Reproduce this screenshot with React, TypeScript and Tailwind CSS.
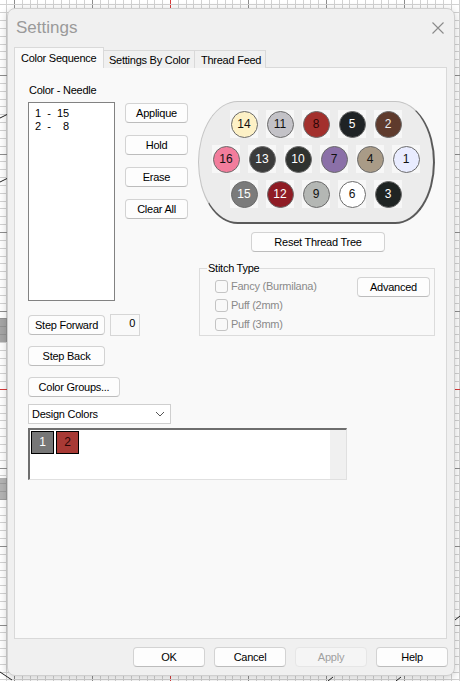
import React from "react";

type C = [number, string, string];
const row1: C[] = [
  [14, "#fdf1c6", "#111"],
  [11, "#c3c2c7", "#111"],
  [8, "#a3302d", "#2a0505"],
  [5, "#1f2325", "#fff"],
  [2, "#5f3b2d", "#eee"],
];
const row2: C[] = [
  [16, "#f27d9c", "#111"],
  [13, "#3b3b3b", "#fff"],
  [10, "#2f322f", "#fff"],
  [7, "#8b70a8", "#111"],
  [4, "#a99b87", "#111"],
  [1, "#e9ecff", "#111"],
];
const row3: C[] = [
  [15, "#7b7b7b", "#fff"],
  [12, "#8f1c25", "#fff"],
  [9, "#b4b7b4", "#111"],
  [6, "#ffffff", "#111"],
  [3, "#1f2423", "#fff"],
];

function GridBg() {
  const v: React.ReactNode[] = [];
  for (let k = -2; k < 60; k++) {
    const x = 14 + 7.8 * k;
    const major = k % 10 === 0;
    const red = k === 20;
    v.push(
      <line
        key={"v" + k}
        x1={Math.round(x) + 0.5}
        x2={Math.round(x) + 0.5}
        y1={0}
        y2={681}
        stroke={red ? "#d63a3a" : major ? "#8e8e8e" : "#d2d2d2"}
        strokeWidth={1}
      />
    );
  }
  for (let k = -10; k < 80; k++) {
    const y = 75 + 7.85 * k;
    const major = k % 10 === 0;
    const red = k === 40;
    v.push(
      <line
        key={"h" + k}
        y1={Math.round(y) + 0.5}
        y2={Math.round(y) + 0.5}
        x1={0}
        x2={460}
        stroke={red ? "#d63a3a" : major ? "#8e8e8e" : "#d2d2d2"}
        strokeWidth={1}
      />
    );
  }
  return (
    <svg className="absolute inset-0" width={460} height={681}>
      <rect width={460} height={681} fill="#ffffff" />
      {v}
      <rect x={0} y={318} width={7} height={24} fill="#6a6a6a" opacity={0.6} />
      <rect x={0} y={478} width={7} height={22} fill="#6a6a6a" opacity={0.5} />
      <line x1={0} y1={182} x2={8} y2={178} stroke="#222" />
      <line x1={0} y1={118} x2={8} y2={114} stroke="#222" />
      <line x1={0} y1={672} x2={12} y2={680} stroke="#222" />
      <line x1={455} y1={620} x2={460} y2={616} stroke="#222" />
      <line x1={328} y1={681} x2={333} y2={677} stroke="#222" />
      <line x1={396} y1={681} x2={401} y2={677} stroke="#222" />
    </svg>
  );
}

function Btn({
  children,
  className = "",
  disabled = false,
}: {
  children: React.ReactNode;
  className?: string;
  disabled?: boolean;
}) {
  return (
    <div
      className={
        "flex h-[20px] items-center justify-center rounded-[4px] border " +
        (disabled
          ? "border-[#e6e6e6] bg-[#f5f5f5] text-[#a0a0a0] "
          : "border-[#d3d3d3] border-b-[#bcbcbc] bg-[#fdfdfd] text-black ") +
        className
      }
    >
      {children}
    </div>
  );
}

function Circle({ c }: { c: C }) {
  return (
    <div className="flex h-[28px] w-[28px] items-center justify-center bg-[#f7f7f7]">
      <div
        className="flex h-[27px] w-[27px] items-center justify-center rounded-full border border-[#6a6a6a] text-[12px] tracking-[0px]"
        style={{ backgroundColor: c[1], color: c[2] }}
      >
        {c[0]}
      </div>
    </div>
  );
}

function Check({ label }: { label: string }) {
  return (
    <div className="flex h-[19px] items-center gap-[3px]">
      <div className="h-[13px] w-[13px] rounded-[3px] border border-[#c4c4c4] bg-[#f9f9f9]" />
      <span className="text-[#8a8a8a]">{label}</span>
    </div>
  );
}

export default function App() {
  return (
    <div className="relative h-[681px] w-[460px] overflow-hidden font-['Liberation_Sans',Arial,sans-serif] text-[11px] leading-[13px] tracking-[-0.25px] text-black">
      <GridBg />
      <div className="relative pl-[7px] pt-[8px]">
        <div className="flex h-[668px] w-[448px] flex-col rounded-[8px] border border-[#cfcfcf] bg-[#f0f0f0] shadow-[0_2px_8px_rgba(0,0,0,0.2)]">
          {/* Title bar */}
          <div className="flex h-[38px] items-center justify-between pl-[8px] pr-[8px]">
            <span className="text-[17px] leading-[20px] tracking-[0px] text-[#9a9a9a]">Settings</span>
            <svg width="14" height="14" viewBox="0 0 14 14" className="mr-[1px]">
              <path d="M1.5 1.5 L12.5 12.5 M12.5 1.5 L1.5 12.5" stroke="#8a8a8a" strokeWidth="1.1" />
            </svg>
          </div>
          {/* Tabs */}
          <div className="relative z-10 flex h-[21px] items-end pl-[6px]">
            <div className="flex h-[21px] w-[90px] items-start border border-b-0 border-[#d9d9d9] bg-[#f9f9f9] pl-[6px] pt-[4px]">
              Color Sequence
            </div>
            <div className="flex h-[18px] w-[91px] items-start border border-b-0 border-l-0 border-[#d9d9d9] bg-[#f0f0f0] pl-[5px] pt-[3px]">
              Settings By Color
            </div>
            <div className="flex h-[18px] w-[71px] items-start border border-b-0 border-l-0 border-[#d9d9d9] bg-[#f0f0f0] pl-[6px] pt-[3px]">
              Thread Feed
            </div>
          </div>
          {/* Panel */}
          <div className="ml-[6px] h-[572px] w-[433px] -mt-px border border-[#d9d9d9] bg-[#f9f9f9] pl-[13px] pt-[16px]">
            <div className="flex items-start gap-[10px]">
              {/* Left column */}
              <div className="flex w-[160px] flex-col">
                <div className="pl-[1px]">Color - Needle</div>
                <div className="mt-[5px] flex items-start gap-[10px]">
                  <div className="h-[199px] w-[87px] border border-[#828282] bg-white pl-[6px] pt-[4px] tracking-[0px]">
                    <div className="whitespace-pre">{"1  -  15"}</div>
                    <div className="whitespace-pre">{"2  -    8"}</div>
                  </div>
                  <div className="mt-[1px] flex flex-col gap-[12px]">
                    <Btn className="w-[63px]">Applique</Btn>
                    <Btn className="w-[63px]">Hold</Btn>
                    <Btn className="w-[63px]">Erase</Btn>
                    <Btn className="w-[63px]">Clear All</Btn>
                  </div>
                </div>
                <div className="mt-[13px] flex items-center gap-[5px]">
                  <Btn className="w-[77px]">Step Forward</Btn>
                  <div className="flex h-[22px] w-[30px] items-start justify-end border border-[#d6d6d6] bg-[#f9f9f9] pr-[4px] pt-[2px]">
                    0
                  </div>
                </div>
                <Btn className="mt-[10px] w-[77px]">Step Back</Btn>
                <Btn className="mt-[11px] w-[92px]">Color Groups...</Btn>
                <div className="mt-[7px] flex h-[20px] w-[143px] items-center justify-between border border-[#cfcfcf] bg-white pl-[3px] pr-[5px]">
                  <span>Design Colors</span>
                  <svg width="10" height="6" viewBox="0 0 10 6">
                    <path d="M1 1 L5 5 L9 1" fill="none" stroke="#555" strokeWidth="1" />
                  </svg>
                </div>
              </div>
              {/* Right column */}
              <div className="mt-[17px] flex w-[237px] flex-col">
                <div className="flex h-[123px] w-[237px] flex-col items-center gap-[7px] rounded-[40px/62px] border border-[#c4c4c4] border-b-2 border-r-2 border-b-[#5a5a5a] border-r-[#5a5a5a] bg-[#ececec] pt-[8px]">
                  <div className="flex gap-[8px]">
                    {row1.map((c) => (
                      <Circle key={c[0]} c={c} />
                    ))}
                  </div>
                  <div className="flex gap-[8px]">
                    {row2.map((c) => (
                      <Circle key={c[0]} c={c} />
                    ))}
                  </div>
                  <div className="flex gap-[8px]">
                    {row3.map((c) => (
                      <Circle key={c[0]} c={c} />
                    ))}
                  </div>
                </div>
                <Btn className="ml-[53px] mt-[8px] w-[134px]">Reset Thread Tree</Btn>
                <div className="relative ml-[1px] mt-[16px] h-[68px] w-[236px] border border-[#dcdcdc]">
                  <div className="absolute -top-[7px] left-[7px] bg-[#f9f9f9] px-[1px]">Stitch Type</div>
                  <div className="flex justify-between pl-[15px] pr-[4px] pt-[8px]">
                    <div className="flex flex-col">
                      <Check label="Fancy (Burmilana)" />
                      <Check label="Puff (2mm)" />
                      <Check label="Puff (3mm)" />
                    </div>
                    <Btn className="mt-[0px] w-[73px]">Advanced</Btn>
                  </div>
                </div>
              </div>
            </div>
            {/* Color box */}
            <div className="mt-[4px] flex h-[52px] w-[319px] border-l-2 border-t-2 border-b border-r border-l-[#6e6e6e] border-t-[#6e6e6e] border-b-[#e0e0e0] border-r-[#e0e0e0] bg-white">
              <div className="flex flex-1 items-start gap-[2px] pl-[1px] pt-[1px] tracking-[0px]">
                <div className="flex h-[23px] w-[23px] items-center justify-center border border-black bg-[#777777] text-[12px] text-white">
                  1
                </div>
                <div className="flex h-[23px] w-[23px] items-center justify-center border border-black bg-[#a83a35] text-[12px] text-[#2a0606]">
                  2
                </div>
              </div>
              <div className="w-[16px] bg-[#f0f0f0]" />
            </div>
          </div>
          {/* Bottom buttons */}
          <div className="mt-[8px] flex justify-end gap-[9px] pr-[6px]">
            <Btn className="w-[72px]">OK</Btn>
            <Btn className="w-[72px]">Cancel</Btn>
            <Btn className="w-[72px]" disabled>
              Apply
            </Btn>
            <Btn className="w-[72px]">Help</Btn>
          </div>
        </div>
      </div>
    </div>
  );
}
